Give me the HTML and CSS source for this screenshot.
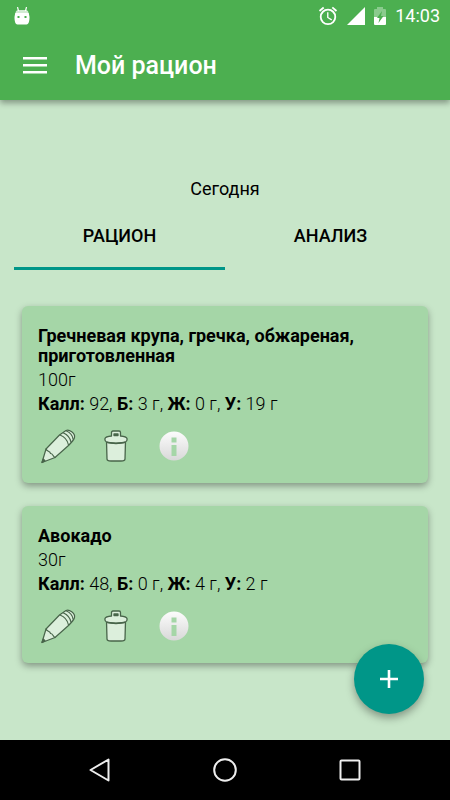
FILE: index.html
```html
<!DOCTYPE html>
<html lang="ru">
<head>
	<meta charset="UTF-8">
	<meta name="viewport" content="width=device-width, initial-scale=1">
	<title>Мой рацион</title>
	<link rel="stylesheet" href="styles.css">
</head>
<body>
<!-- иконки карточек -->
<svg class="sprite" aria-hidden="true">
	<linearGradient id="silver" x1="0" y1="0" x2="0" y2="1">
		<stop offset="0" stop-color="#fcfcfc"/>
		<stop offset="1" stop-color="#d8d8d8"/>
	</linearGradient>
	<symbol id="pencil" viewBox="0 0 36 36">
		<g fill="#dcefdc" stroke="#48654a" stroke-width="1.2" stroke-linejoin="round" stroke-linecap="round">
			<path d="M2 34.500 6 21 19.500 7 26 2.500C29 1 35.500 5 34.500 9.500C34 12 31 15 28.500 17.500L15 29.500Z"/>
			<path d="M6 21C7 24 10 22.500 10.500 25.500C13 25.500 12.500 28 15 29.500M20 7C24 8.500 27.500 12 28.500 17M23.500 5C27 6.500 30 9.500 31 14M26.500 3C30 4.500 32.500 7.500 33 11" fill="none" stroke-width="1.200"/>
			<path d="M2 34.500 3.200 31 5 32.700Z" fill="#48654a"/>
		</g>
	</symbol>
	<symbol id="trash" viewBox="0 0 36 36">
		<g fill="#dcefdc" stroke="#48654a" stroke-width="1.300" stroke-linejoin="round">
			<path d="M8.500 13H27.500L27 31C27 32.500 25 33 23 33H13C11 33 9 32.500 9 31Z"/>
			<path d="M13.500 8V4.500C13.500 3.500 14 3 15 3H21C22 3 22.500 3.500 22.500 4.500V8C26 8.300 28.500 8.700 29 10.500C29.500 13 28 14 26 14.500C21 15.500 15 15.500 10 14.500C8 14 6.500 13 7 10.500C7.500 8.700 10 8.300 13.500 8Z"/>
			<path d="M16 6H20V7.500H16Z" fill="#48654a"/>
			<path d="M9 14.300C15 15.800 21 15.800 27 14.300" fill="none" stroke-width="1.600"/>
		</g>
	</symbol>
	<symbol id="info" viewBox="0 0 36 36">
		<path fill="url(#silver)" fill-rule="evenodd" d="M18 3.500A14.500 14.500 0 1 1 18 32.500A14.500 14.500 0 1 1 18 3.500ZM15.500 9.500V14.500H20.500V9.500ZM15.500 17V28H20.500V17Z"/>
	</symbol>
</svg>

<div class="screen">
	<header class="header">
		<div class="status">
			<svg class="status-robot" width="16" height="18" viewBox="0 0 16 18" aria-hidden="true">
				<path d="M3.500 0 4.500 4M12.500 0 11.500 4" stroke="#fff" stroke-width="1.200"/>
				<path fill="#fff" fill-opacity=".75" d="M1.500 6C1.500 4 3 3 4.500 3H11.500C13 3 14.500 4 14.500 6Z"/>
				<path fill="#fff" fill-rule="evenodd" d="M1.200 6H14.800L15.500 10C15.500 13 15 17.500 12.500 17.500H3.500C1 17.500 .5 13 .5 10ZM3.500 9V11H5.500V9ZM10.500 9V11H12.500V9Z"/>
			</svg>
			<svg width="20" height="20" viewBox="1 1 22 22" aria-hidden="true">
				<path fill="#fff" d="M22 5.700l-4.600-3.900-1.300 1.500 4.600 3.900L22 5.700zM7.900 3.400L6.600 1.900 2 5.700l1.300 1.500 4.600-3.800zM12.500 8H11v6l4.700 2.900.8-1.200-4-2.400V8zM12 4a9 9 0 1 0 0 18 9 9 0 0 0 0-18zm0 16a7 7 0 1 1 0-14 7 7 0 0 1 0 14z"/>
			</svg>
			<svg width="18" height="18" viewBox="0 0 18 18" aria-hidden="true">
				<path fill="#fff" d="M0 18H18V0Z"/>
			</svg>
			<svg width="12" height="18" viewBox="0 0 12 18" aria-hidden="true">
				<path fill="#fff" fill-opacity=".35" d="M0 10V3Q0 2 1 2H3V0H9V2H11Q12 2 12 3V10Z"/>
				<path fill="#fff" d="M0 10H12V17Q12 18 11 18H1Q0 18 0 17Z"/>
				<path fill="#4caf50" d="M8 4 3 11H5.500L4.500 16 9.500 9H7Z"/>
			</svg>
			<time class="clock">14:03</time>
		</div>
		<div class="toolbar">
			<button class="menu" type="button" aria-label="Меню">
				<svg width="24" height="18" viewBox="0 0 24 18"><path fill="#fff" d="M0 0H24V2.500H0ZM0 7H24V9.500H0ZM0 14H24V16.500H0Z"/></svg>
			</button>
			<h1 class="title">Мой рацион</h1>
		</div>
	</header>

	<main class="content">
		<p class="day">Сегодня</p>
		<div class="tabs" role="tablist">
			<button class="tab active" type="button" role="tab" aria-selected="true">РАЦИОН</button>
			<button class="tab" type="button" role="tab" aria-selected="false">АНАЛИЗ</button>
		</div>

		<div class="list">
			<article class="card">
				<h2 class="name">Гречневая крупа, гречка, обжареная, приготовленная</h2>
				<p class="line">100г</p>
				<p class="line"><b>Калл:</b> 92, <b>Б:</b> 3 г, <b>Ж:</b> 0 г, <b>У:</b> 19 г</p>
				<div class="actions">
					<button class="action" type="button" aria-label="Изменить"><svg width="36" height="36"><use href="#pencil"/></svg></button>
					<button class="action" type="button" aria-label="Удалить"><svg width="36" height="36"><use href="#trash"/></svg></button>
					<button class="action" type="button" aria-label="Информация"><svg width="36" height="36"><use href="#info"/></svg></button>
				</div>
			</article>
			<article class="card">
				<h2 class="name">Авокадо</h2>
				<p class="line">30г</p>
				<p class="line"><b>Калл:</b> 48, <b>Б:</b> 0 г, <b>Ж:</b> 4 г, <b>У:</b> 2 г</p>
				<div class="actions">
					<button class="action" type="button" aria-label="Изменить"><svg width="36" height="36"><use href="#pencil"/></svg></button>
					<button class="action" type="button" aria-label="Удалить"><svg width="36" height="36"><use href="#trash"/></svg></button>
					<button class="action" type="button" aria-label="Информация"><svg width="36" height="36"><use href="#info"/></svg></button>
				</div>
			</article>
		</div>

		<button class="fab" type="button" aria-label="Добавить">
			<svg width="18" height="18" viewBox="0 0 18 18"><path fill="#fff" d="M7.700 0H10.300V7.700H18V10.300H10.300V18H7.700V10.300H0V7.700H7.700Z"/></svg>
		</button>
	</main>

	<nav class="navbar">
		<button type="button" aria-label="Назад">
			<svg width="24" height="24" viewBox="0 0 24 24"><path d="M20.500 1.500V22.500L2.500 12Z"/></svg>
		</button>
		<button type="button" aria-label="Домой">
			<svg width="24" height="24" viewBox="0 0 24 24"><circle cx="12" cy="12" r="10.800"/></svg>
		</button>
		<button type="button" aria-label="Обзор">
			<svg width="24" height="24" viewBox="0 0 24 24"><rect x="2.500" y="2.500" width="19" height="19" rx="1"/></svg>
		</button>
	</nav>
</div>
</body>
</html>
```
FILE: styles.css
```css
* {
  box-sizing: border-box;
}
body {
  margin: 0;
  background: #c8e6c9;
  color: #000;
  font-family: Roboto, "Liberation Sans", sans-serif;
  font-size: 18px;
}
h1, h2, p {
  margin: 0;
}
button {
  padding: 0;
  border: 0;
  background: none;
  color: inherit;
  font: inherit;
  cursor: pointer;
}
svg {
  display: block;
}
.sprite {
  position: absolute;
  width: 0;
  height: 0;
}
.screen {
  display: flex;
  flex-direction: column;
  min-height: 100vh;
}

/* шапка */
.header {
  position: relative;
  background: #4caf50;
  color: #fff;
  box-shadow: 0 3px 6px rgba(0, 0, 0, .35);
}
.status {
  display: flex;
  align-items: center;
  gap: 9px;
  height: 32px;
  padding: 0 10px 0 14px;
}
.status-robot {
  margin-right: auto;
}
.clock {
  line-height: 32px;
}
.toolbar {
  display: flex;
  align-items: center;
  gap: 28px;
  height: 68px;
  padding: 0 23px;
}
.title {
  font-size: 25px;
  font-weight: 500;
  line-height: 32px;
}

/* содержимое */
.content {
  position: relative;
  flex: 1;
  padding: 76px 14px 24px;
}
.day {
  line-height: 26px;
  text-align: center;
}
.tabs {
  display: flex;
}
.tab {
  flex: 1;
  height: 68px;
  padding-top: 2px;
  border-bottom: 3px solid transparent;
  font-weight: 500;
}
.tab.active {
  border-color: #009688;
}
.list {
  display: flex;
  flex-direction: column;
  gap: 23px;
  padding: 36px 8px 0;
}
.card {
  padding: 20px 16px 19px;
  border-radius: 6px;
  background: #a5d6a7;
  box-shadow: 0 3px 7px rgba(0, 0, 0, .35);
}
.name {
  font-size: 18px;
  font-weight: 700;
  line-height: 20px;
}
.line {
  margin-top: 4px;
  font-weight: 300;
  line-height: 20px;
}
.line b {
  font-weight: 700;
}
.actions {
  display: flex;
  gap: 22px;
  margin-top: 14px;
  padding-left: 2px;
}
.fab {
  display: flex;
  align-items: center;
  justify-content: center;
  position: absolute;
  right: 26px;
  bottom: 26px;
  width: 70px;
  height: 70px;
  border-radius: 50%;
  background: #009688;
  box-shadow: 0 4px 9px rgba(0, 0, 0, .35);
}

/* системные кнопки */
.navbar {
  display: flex;
  justify-content: center;
  gap: 101px;
  height: 60px;
  background: #000;
}
.navbar svg {
  fill: none;
  stroke: #eee;
  stroke-width: 2;
  stroke-linejoin: round;
}
```
